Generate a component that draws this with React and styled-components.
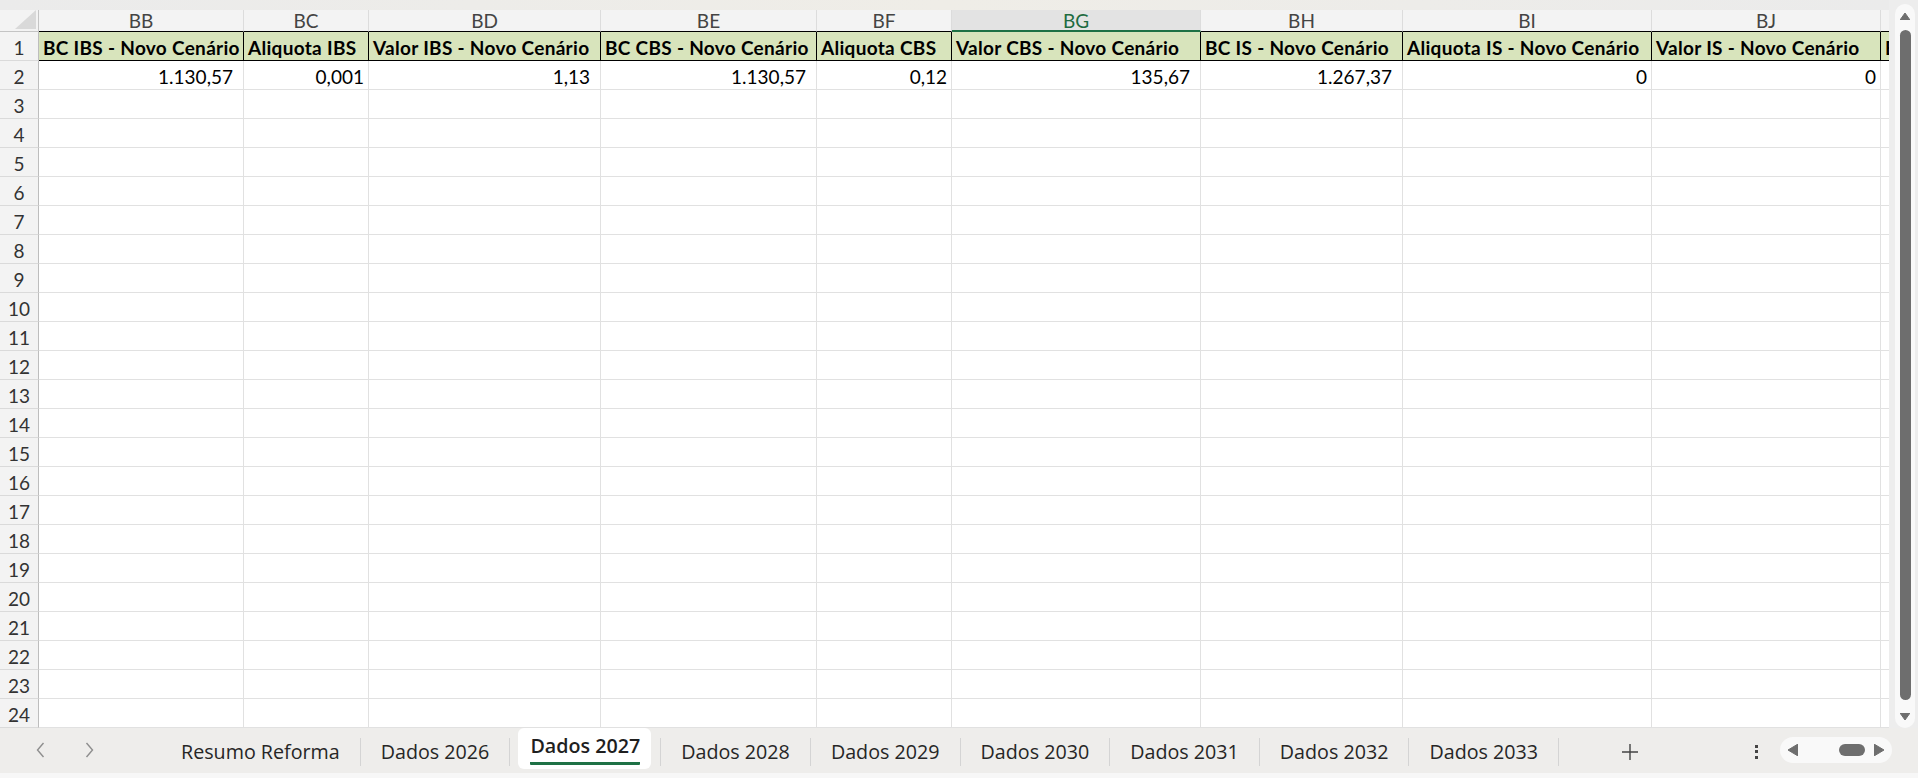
import React from "react";
import styled, { createGlobalStyle } from "styled-components";

const GlobalStyle = createGlobalStyle`
  *, *::before, *::after { box-sizing: border-box; }
  html, body { margin: 0; padding: 0; }
  body {
    width: 1918px;
    height: 778px;
    overflow: hidden;
    background: #ededed;
    font-family: "Lato", "Liberation Sans", sans-serif;
  }
`;

const columns = [
  { id: "BB", w: 205, title: "BC IBS - Novo Cenário", value: "1.130,57", pad: true },
  { id: "BC", w: 125, title: "Aliquota IBS", value: "0,001" },
  { id: "BD", w: 232, title: "Valor IBS - Novo Cenário", value: "1,13", pad: true },
  { id: "BE", w: 216, title: "BC CBS - Novo Cenário", value: "1.130,57", pad: true },
  { id: "BF", w: 135, title: "Aliquota CBS", value: "0,12" },
  { id: "BG", w: 249, title: "Valor CBS - Novo Cenário", value: "135,67", pad: true, active: true },
  { id: "BH", w: 202, title: "BC IS - Novo Cenário", value: "1.267,37", pad: true },
  { id: "BI", w: 249, title: "Aliquota IS - Novo Cenário", value: "0" },
  { id: "BJ", w: 229, title: "Valor IS - Novo Cenário", value: "0" },
  { id: "BK", w: 180, title: "BC Total - Novo Cenário", value: "" },
];

const sheets = [
  "Resumo Reforma",
  "Dados 2026",
  "Dados 2027",
  "Dados 2028",
  "Dados 2029",
  "Dados 2030",
  "Dados 2031",
  "Dados 2032",
  "Dados 2033",
];

const Page = styled.div`
  width: 1918px;
  height: 778px;
  display: flex;
  flex-direction: column;
  background: #ededed;
  overflow: hidden;
`;

const Main = styled.div`
  display: flex;
  height: 728px;
`;

const SheetArea = styled.div`
  width: 1889px;
  display: flex;
  flex-direction: column;
`;

const TopStrip = styled.div`
  height: 10px;
  background: linear-gradient(90deg, #ebebeb, #efede7 50%, #ebebeb);
`;

const Sheet = styled.div`
  display: grid;
  grid-template-columns: ${({ $template }) => $template};
  grid-template-rows: 22px repeat(24, 29px);
  width: 1889px;
  height: 718px;
  overflow: hidden;
  background: #fff;
  font-size: 19px;
  color: #000;
`;

const Corner = styled.div`
  background: #f3f3f3;
  border-right: 1px solid #c4c4c4;
  border-bottom: 1px solid #c4c4c4;
  display: flex;
  justify-content: flex-end;
  align-items: flex-start;
  padding-right: 2px;
  svg {
    display: block;
  }
`;

const ColHead = styled.div`
  background: ${({ $active }) => ($active ? "#e3e3e3" : "#f3f3f3")};
  color: ${({ $active }) => ($active ? "#1e6b41" : "#444")};
  border-right: 1px solid #dcdcdc;
  border-bottom: ${({ $active }) => ($active ? "2px solid #1e7145" : "1px solid #000")};
  text-align: center;
  line-height: 21px;
`;

const RowHead = styled.div`
  background: #f3f3f3;
  color: #333;
  border-right: 1px solid #bdbdbd;
  border-bottom: 1px solid #dadada;
  display: flex;
  align-items: flex-end;
  justify-content: center;
  padding-bottom: 1px;
  line-height: 22px;
`;

const Cell = styled.div`
  display: flex;
  align-items: flex-end;
  justify-content: ${({ $right }) => ($right ? "flex-end" : "flex-start")};
  padding: 0 ${({ $pad }) => ($pad ? 10 : 4)}px 1px 4px;
  background: ${({ $title }) => ($title ? "#d8e4bc" : "#fff")};
  font-weight: ${({ $title }) => ($title ? 700 : 400)};
  letter-spacing: ${({ $title }) => ($title ? "0.3px" : "0")};
  border-right: 1px solid ${({ $title }) => ($title ? "#000" : "#e1e1e1")};
  border-bottom: 1px solid ${({ $title }) => ($title ? "#000" : "#e1e1e1")};
  line-height: 22px;
  white-space: nowrap;
  overflow: hidden;
`;

const ScrollColumn = styled.div`
  width: 29px;
  padding: 4px 3px 0 6px;
`;

const VTrack = styled.div`
  height: 100%;
  border-radius: 10px;
  background: #f9f9f9;
  display: flex;
  flex-direction: column;
  align-items: center;
  padding: 9px 0 8px;
  svg {
    display: block;
  }
`;

const VThumb = styled.div`
  flex: 1;
  width: 11px;
  margin: 10px 0 13px;
  border-radius: 6px;
  background: #6e6e6e;
`;

const TabBar = styled.div`
  height: 45px;
  display: flex;
  align-items: flex-start;
  background: #eeedeb;
  font-family: "Open Sans", "Noto Sans", sans-serif;
  font-size: 19.7px;
  color: #262626;
`;

const Nav = styled.div`
  width: 161px;
  height: 100%;
  display: flex;
  gap: 40px;
  padding: 14px 0 0 36px;
  svg {
    display: block;
  }
`;

const Tabs = styled.div`
  display: flex;
  align-items: flex-start;
  height: 45px;
`;

const Tab = styled.div`
  height: 41px;
  display: flex;
  align-items: flex-start;
  white-space: nowrap;
  padding: ${({ $active }) => ($active ? "6px 11px 0 12px" : "12px 20px 0")};
  margin: ${({ $active }) => ($active ? "0 9px 0 8px" : "0")};
  background: ${({ $active }) => ($active ? "#fff" : "transparent")};
  border-radius: 6px;
  font-weight: ${({ $active }) => ($active ? 600 : 400)};
  color: ${({ $active }) => ($active ? "#1f1f1f" : "#262626")};
`;

const TabLabel = styled.span`
  line-height: 24px;
  padding-bottom: ${({ $active }) => ($active ? "4px" : "0")};
  border-bottom: ${({ $active }) => ($active ? "3px solid #1e7145" : "none")};
  border-radius: 1px;
`;

const Separator = styled.span`
  width: 1px;
  height: 28px;
  margin-top: 10px;
  background: #d4d4d4;
`;

const AddTab = styled.div`
  width: 141px;
  height: 45px;
  display: flex;
  align-items: center;
  justify-content: center;
  padding-top: 3px;
  svg {
    display: block;
  }
`;

const RightGroup = styled.div`
  margin-left: auto;
  margin-right: 26px;
  display: flex;
  align-items: flex-start;
  gap: 14px;
`;

const More = styled.div`
  width: 20px;
  height: 45px;
  display: flex;
  flex-direction: column;
  align-items: center;
  justify-content: center;
  gap: 2.5px;
  padding-top: 2px;
  span {
    width: 3px;
    height: 3px;
    background: #444;
  }
`;

const HTrack = styled.div`
  width: 112px;
  height: 26px;
  margin-top: 9px;
  border-radius: 13px;
  background: #f9f9f9;
  display: flex;
  align-items: center;
  padding: 0 8px;
  svg {
    display: block;
  }
`;

const HThumb = styled.div`
  width: 26px;
  height: 12px;
  margin: 0 9px 0 41px;
  border-radius: 6px;
  background: #6e6e6e;
`;

const BottomStrip = styled.div`
  height: 5px;
  background: #f7f7f7;
`;

const Chevron = ({ dir }) => (
  <svg width="9" height="16" viewBox="0 0 9 16">
    <polyline
      points={dir === "left" ? "7.5,1 1.5,8 7.5,15" : "1.5,1 7.5,8 1.5,15"}
      fill="none"
      stroke="#8e8e8e"
      strokeWidth="1.4"
    />
  </svg>
);

const Triangle = ({ dir, w = 10, h = 7 }) => {
  const pts = {
    up: `0,${h} ${w / 2},0 ${w},${h}`,
    down: `0,0 ${w},0 ${w / 2},${h}`,
    left: `${w},0 ${w},${h} 0,${h / 2}`,
    right: `0,0 ${w},${h / 2} 0,${h}`,
  }[dir];
  return (
    <svg width={w} height={h} viewBox={`0 0 ${w} ${h}`}>
      <polygon points={pts} fill="#6e6e6e" strokeLinejoin="round" stroke="#6e6e6e" strokeWidth="1" />
    </svg>
  );
};

const rows = Array.from({ length: 24 }, (_, i) => i + 1);

const App = () => {
  const template = ["39px", ...columns.map((c) => `${c.w}px`)].join(" ");
  return (
    <Page>
      <GlobalStyle />
      <Main>
        <SheetArea>
          <TopStrip />
          <Sheet $template={template}>
            <Corner>
              <svg width="21" height="19" viewBox="0 0 21 19">
                <polygon points="21,0 21,19 0,19" fill="#d9d9d9" />
              </svg>
            </Corner>
            {columns.map((c) => (
              <ColHead key={c.id} $active={c.active}>
                {c.id}
              </ColHead>
            ))}
            {rows.map((r) => (
              <React.Fragment key={r}>
                <RowHead>{r}</RowHead>
                {columns.map((c) => {
                  if (r === 1) {
                    return (
                      <Cell key={c.id} $title>
                        {c.title}
                      </Cell>
                    );
                  }
                  if (r === 2) {
                    return (
                      <Cell key={c.id} $right $pad={c.pad}>
                        {c.value}
                      </Cell>
                    );
                  }
                  return <Cell key={c.id} />;
                })}
              </React.Fragment>
            ))}
          </Sheet>
        </SheetArea>
        <ScrollColumn>
          <VTrack>
            <Triangle dir="up" />
            <VThumb />
            <Triangle dir="down" />
          </VTrack>
        </ScrollColumn>
      </Main>
      <TabBar>
        <Nav>
          <Chevron dir="left" />
          <Chevron dir="right" />
        </Nav>
        <Tabs>
          {sheets.map((name) => {
            const active = name === "Dados 2027";
            return (
              <React.Fragment key={name}>
                <Tab $active={active}>
                  <TabLabel $active={active}>{name}</TabLabel>
                </Tab>
                <Separator />
              </React.Fragment>
            );
          })}
        </Tabs>
        <AddTab>
          <svg width="18" height="18" viewBox="0 0 18 18">
            <path d="M9 1v16M1 9h16" stroke="#444" strokeWidth="1.4" fill="none" />
          </svg>
        </AddTab>
        <RightGroup>
          <More>
            <span />
            <span />
            <span />
          </More>
          <HTrack>
            <Triangle dir="left" w={10} h={12} />
            <HThumb />
            <Triangle dir="right" w={10} h={12} />
          </HTrack>
        </RightGroup>
      </TabBar>
      <BottomStrip />
    </Page>
  );
};

export default App;
